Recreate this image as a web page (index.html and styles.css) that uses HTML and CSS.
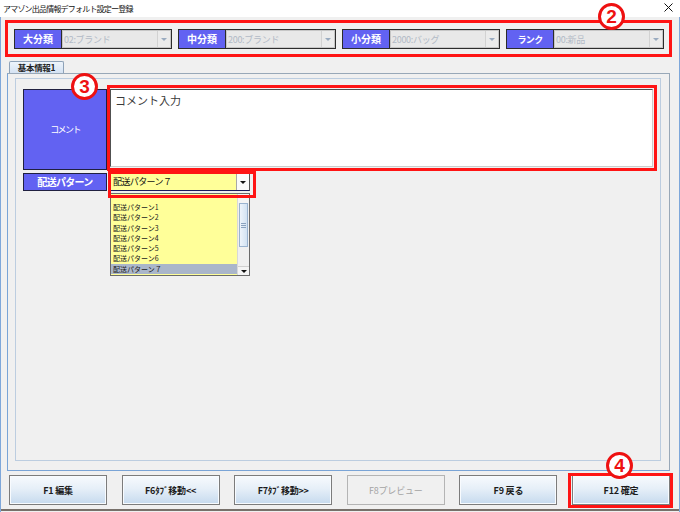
FILE: index.html
```html
<!DOCTYPE html>
<html lang="ja">
<head>
<meta charset="utf-8">
<title>アマゾン出品情報デフォルト設定ー登録</title>
<link rel="stylesheet" href="styles.css">
</head>
<body>
<div class="window">
  <div class="titlebar">
    <span class="title">アマゾン出品情報デフォルト設定ー登録</span>
    <svg class="close" width="9" height="9" viewBox="0 0 9 9"><path d="M0.5 0.5L8.5 8.5M8.5 0.5L0.5 8.5" stroke="#111" stroke-width="1"/></svg>
  </div>
  <div class="client">
    <div class="header">
      <div class="field"><div class="flabel">大分類</div><div class="dcombo"><span class="dval">02:ブランド</span><span class="darrow"><i></i></span></div></div>
      <div class="field"><div class="flabel">中分類</div><div class="dcombo"><span class="dval">200:ブランド</span><span class="darrow"><i></i></span></div></div>
      <div class="field"><div class="flabel">小分類</div><div class="dcombo"><span class="dval">2000:バッグ</span><span class="darrow"><i></i></span></div></div>
      <div class="field"><div class="flabel kana">ランク</div><div class="dcombo"><span class="dval">00:新品</span><span class="darrow"><i></i></span></div></div>
    </div>
    <div class="tabs"><div class="tab">基本情報1</div></div>
    <div class="tabpanel">
      <div class="inner">
        <div class="row-comment">
          <div class="blabel tall">コメント</div>
          <div class="textarea mark">コメント入力</div>
        </div>
        <div class="row-ship">
          <div class="blabel ship">配送パターン</div>
          <div class="combo mark">
            <span class="cval">配送パターン７</span>
            <span class="carrow"><i></i></span>
            <div class="popup">
              <div class="list">
                <div class="item">配送パターン1</div>
                <div class="item">配送パターン2</div>
                <div class="item">配送パターン3</div>
                <div class="item">配送パターン4</div>
                <div class="item">配送パターン5</div>
                <div class="item">配送パターン6</div>
                <div class="item sel">配送パターン７</div>
              </div>
              <div class="scroll">
                <div class="sbtn"></div>
                <div class="thumb"><span class="grip"></span></div>
                <div class="track"></div>
                <div class="sbtn down"><i></i></div>
              </div>
            </div>
          </div>
        </div>
      </div>
    </div>
    <div class="buttons">
      <div class="btn">F1 編集</div>
      <div class="btn">F6ﾀﾌﾞ移動&lt;&lt;</div>
      <div class="btn">F7ﾀﾌﾞ移動&gt;&gt;</div>
      <div class="btn disabled">F8プレビュー</div>
      <div class="btn">F9 戻る</div>
      <div class="btn mark f12">F12 確定</div>
    </div>
    <div class="bottomline"></div>
  </div>
  <span class="badge b2">2</span>
  <span class="badge b3">3</span>
  <span class="badge b4">4</span>
</div>
</body>
</html>
```
FILE: styles.css
```css
* { box-sizing: border-box; }
body {
  margin: 0;
  width: 680px;
  height: 512px;
  overflow: hidden;
  background: #f0f0f0;
  font-family: "Noto Sans CJK JP", "Noto Sans", sans-serif;
  color: #1a1a1a;
}
.window {
  position: relative;
  height: 512px;
  display: flex;
  flex-direction: column;
}
.titlebar {
  height: 17px;
  flex: none;
  background: #ffffff;
  display: flex;
  align-items: center;
  justify-content: space-between;
  padding: 1px 7px 0 3px;
}
.title {
  font-size: 8px;
  letter-spacing: -0.8px;
  color: #111;
  line-height: 10px;
}
.close { display: block; margin-top: -3px; }
.client {
  flex: 1;
  display: flex;
  flex-direction: column;
  border-left: 1px solid #7ea7da;
  border-right: 1px solid #7ea7da;
}
.header {
  margin: 3px 0 0 4px;
  width: 667px;
  height: 37px;
  flex: none;
  border: 3px solid #ff1414;
  padding: 6px 5px 5px 6px;
  display: flex;
  gap: 6px;
}
.field {
  width: 158px;
  height: 20px;
  display: flex;
  border: 1px solid #2c2c2c;
}
.flabel {
  width: 47px;
  flex: none;
  background: #6262f2;
  border-right: 1px solid #2c2c2c;
  color: #fff;
  font-size: 10px;
  font-weight: bold;
  display: flex;
  align-items: center;
  justify-content: center;
  line-height: 1;
}
.flabel.kana { font-size: 9px; letter-spacing: -0.6px; }
.dcombo {
  flex: 1;
  display: flex;
  align-items: center;
  background: #e8e8e8;
  border: 1px solid #c6c6c6;
}
.dval {
  flex: 1;
  font-size: 9px;
  letter-spacing: -0.3px;
  color: #b2bac6;
  padding-left: 1px;
  line-height: 1;
}
.darrow {
  width: 13px;
  height: 100%;
  border-left: 1px solid #d2d2d2;
  background: #ebebeb;
  display: flex;
  align-items: center;
  justify-content: center;
}
.darrow i {
  width: 0;
  height: 0;
  border-left: 3px solid transparent;
  border-right: 3px solid transparent;
  border-top: 3px solid #9aabc0;
}
.tabs {
  margin: 4px 0 0 8px;
  height: 12px;
  flex: none;
  display: flex;
}
.tab {
  width: 55px;
  height: 12px;
  border: 1px solid #8ea2b8;
  border-bottom: 0;
  border-radius: 2px 2px 0 0;
  background: linear-gradient(#eef4fb, #d5e3f3);
  font-size: 8.5px;
  font-weight: bold;
  letter-spacing: -0.3px;
  line-height: 11px;
  text-align: center;
  color: #222;
}
.tabpanel {
  margin-left: 6px;
  width: 663px;
  height: 398px;
  flex: none;
  border: 1px solid #98a8b8;
  border-left-color: #7aa4d6;
  border-bottom-color: #7aa4d6;
  padding: 4px 8px 9px 7px;
}
.inner {
  height: 383px;
  border: 1px solid #bccde0;
  padding: 10px 0 0 7px;
}
.row-comment {
  display: flex;
  align-items: flex-start;
  height: 81px;
}
.blabel {
  width: 84px;
  flex: none;
  background: #6262f2;
  border: 1px solid #202040;
  color: #fff;
  font-weight: bold;
  display: flex;
  align-items: center;
  justify-content: center;
  line-height: 1;
}
.blabel.tall {
  height: 81px;
  font-size: 9px;
  font-weight: normal;
  letter-spacing: -1.6px;
}
.blabel.ship {
  height: 18px;
  font-size: 10px;
  letter-spacing: -0.7px;
}
.textarea {
  position: relative;
  margin-left: 3px;
  width: 543px;
  height: 78px;
  background: #fff;
  border: 1px solid #cccccc;
  border-top-color: #505050;
  border-left-color: #505050;
  font-size: 11px;
  line-height: 14px;
  color: #3a3a3a;
  padding: 3px 4px;
}
.mark::after {
  content: "";
  position: absolute;
  border: 3px solid #ff1414;
  pointer-events: none;
  z-index: 5;
}
.textarea.mark::after { left: -4px; top: -5px; right: -5px; bottom: -5px; }
.row-ship {
  display: flex;
  margin-top: 3px;
  height: 18px;
}
.combo {
  position: relative;
  margin-left: 3px;
  width: 140px;
  height: 18px;
  display: flex;
  background: #ffff99;
  border: 1px solid #555;
  border-bottom-color: #1c1c5c;
}
.combo.mark::after { left: -3px; top: -3px; right: -7px; bottom: -8px; }
.cval {
  flex: 1;
  font-size: 9px;
  letter-spacing: -0.6px;
  line-height: 16px;
  padding-left: 2px;
  color: #111;
}
.carrow {
  width: 13px;
  border-left: 1px solid #a8a8a8;
  background: #fafafa;
  display: flex;
  align-items: center;
  justify-content: center;
}
.carrow i, .sbtn.down i {
  width: 0;
  height: 0;
  border-left: 3px solid transparent;
  border-right: 3px solid transparent;
  border-top: 3px solid #111;
}
.popup {
  position: absolute;
  top: 19px;
  left: -1px;
  width: 140px;
  height: 83px;
  border: 1px solid #6a6a6a;
  background: #ffff99;
  display: flex;
  z-index: 3;
}
.list {
  flex: 1;
  padding-top: 8px;
}
.item {
  height: 10.28px;
  font-size: 7px;
  line-height: 10.28px;
  padding-left: 2px;
  color: #222;
  white-space: nowrap;
}
.item.sel { background: #aab6ca; }
.scroll {
  width: 12px;
  display: flex;
  flex-direction: column;
  background: #f0f0f0;
  border-left: 1px solid #d8d8d8;
}
.sbtn { height: 9px; background: #f4f4f4; }
.sbtn.down {
  display: flex;
  align-items: center;
  justify-content: center;
  border-top: 1px solid #d0d0d0;
}
.thumb {
  height: 44px;
  margin: 0 1px;
  background: linear-gradient(90deg, #eef4fb, #d2e2f2);
  border: 1px solid #9ab3cf;
  display: flex;
  align-items: center;
  justify-content: center;
}
.grip {
  width: 5px;
  height: 5px;
  border-top: 1px solid #8aa2bf;
  border-bottom: 1px solid #8aa2bf;
  background: linear-gradient(#fff0 40%, #8aa2bf 40%, #8aa2bf 60%, #fff0 60%);
}
.track { flex: 1; }
.buttons {
  margin: 4px 0 0 8px;
  width: 661px;
  height: 30px;
  flex: none;
  display: flex;
  justify-content: space-between;
}
.btn {
  position: relative;
  width: 98px;
  height: 30px;
  border: 1px solid #7c7c7c;
  box-shadow: inset 0 0 0 1px #f8fbfe;
  background: linear-gradient(#f7fafd, #e6eff8 45%, #c6daee);
  font-size: 9px;
  font-weight: bold;
  letter-spacing: -0.2px;
  color: #1c1c1c;
  display: flex;
  align-items: center;
  justify-content: center;
}
.btn.disabled {
  background: #f0f0f0;
  border-color: #b4b4b4;
  box-shadow: none;
  color: #a4a4a4;
  font-weight: normal;
}
.btn.f12::after { left: -5px; top: -3px; right: -4px; bottom: -4px; }
.bottomline {
  margin-top: 4px;
  height: 2px;
  flex: none;
  background: #77706a;
}
.badge {
  position: absolute;
  width: 27px;
  height: 27px;
  border: 3px solid #ee1111;
  border-radius: 50%;
  background: #fff;
  color: #ee1111;
  font-family: "Liberation Sans", Arial, sans-serif;
  font-weight: bold;
  font-size: 19px;
  line-height: 21px;
  text-align: center;
  z-index: 10;
}
.b2 { left: 598px; top: 3px; }
.b3 { left: 71px; top: 73px; }
.b4 { left: 606px; top: 452px; }
```
